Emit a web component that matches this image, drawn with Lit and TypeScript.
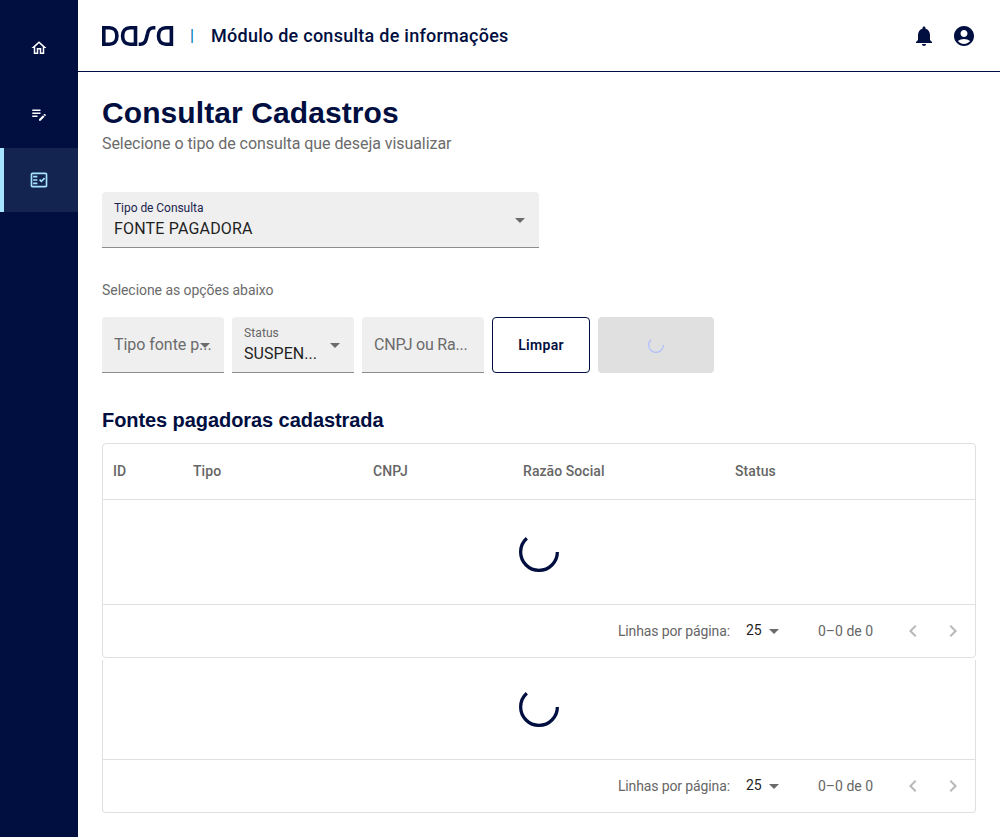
import { LitElement, html, css, svg } from "lit";
import { customElement, property } from "lit/decorators.js";

const icons: Record<string, string> = {
  home: "M12 5.69l5 4.5V18h-2v-6H9v6H7v-7.81l5-4.5M12 3 2 12h3v8h6v-6h2v6h6v-8h3L12 3z",
  edit: "M3 10h11v2H3v-2zm0-2h11V6H3v2zm0 8h7v-2H3v2zm15.01-3.13.71-.71c.39-.39 1.02-.39 1.41 0l.71.71c.39.39.39 1.02 0 1.41l-.71.71-2.12-2.12zm-.71.71-5.3 5.3V21h2.12l5.3-5.3-2.12-2.12z",
  check:
    "M20 3H4c-1.1 0-2 .9-2 2v14c0 1.1.9 2 2 2h16c1.1 0 2-.9 2-2V5c0-1.1-.9-2-2-2zm0 16H4V5h16v14zM19.41 10.42 17.99 9l-3.17 3.17-1.41-1.42L12 12.16 14.82 15zM5 7h5v2H5zm0 4h5v2H5zm0 4h5v2H5z",
  bell: "M12 22c1.1 0 2-.9 2-2h-4c0 1.1.89 2 2 2zm6-6v-5c0-3.07-1.64-5.64-4.5-6.32V4c0-.83-.67-1.5-1.5-1.5s-1.5.67-1.5 1.5v.68C7.63 5.36 6 7.92 6 11v5l-2 2v1h16v-1l-2-2z",
  account:
    "M12 2C6.48 2 2 6.48 2 12s4.48 10 10 10 10-4.48 10-10S17.52 2 12 2zm0 4c1.93 0 3.5 1.57 3.5 3.5S13.93 13 12 13s-3.5-1.57-3.5-3.5S10.07 6 12 6zm0 14c-2.03 0-4.43-.82-6.14-2.88C7.55 15.8 9.68 15 12 15s4.45.8 6.14 2.12C16.43 19.18 14.03 20 12 20z",
  drop: "M7 10l5 5 5-5z",
  left: "M15.41 16.59 10.83 12l4.58-4.59L14 6l-6 6 6 6 1.41-1.41z",
  right: "M8.59 16.59 13.17 12 8.59 7.41 10 6l6 6-6 6-1.41-1.41z",
};

@customElement("ui-icon")
class UiIcon extends LitElement {
  @property() name = "home";
  @property({ type: Number }) size = 24;
  static styles = css`
    :host { display: inline-flex; flex: none; }
    svg { display: block; fill: currentColor; }
  `;
  render() {
    return html`<svg viewBox="0 0 24 24" width=${this.size} height=${this.size} fill-rule="evenodd">
      ${svg`<path d=${icons[this.name]} />`}
    </svg>`;
  }
}

@customElement("ui-spinner")
class UiSpinner extends LitElement {
  @property({ type: Number }) size = 40;
  static styles = css`
    :host { display: inline-flex; }
    svg { display: block; }
    circle { fill: none; stroke: currentColor; stroke-width: 3.6; stroke-dasharray: 80 200; }
  `;
  render() {
    return html`<svg viewBox="22 22 44 44" width=${this.size} height=${this.size}>
      <circle cx="44" cy="44" r="20.2" />
    </svg>`;
  }
}

@customElement("filled-field")
class FilledField extends LitElement {
  @property() label = "";
  @property() value = "";
  @property({ type: Boolean }) select = false;
  static styles = css`
    :host { display: block; }
    .field {
      position: relative;
      box-sizing: border-box;
      height: 56px;
      padding: 7px 0 0 12px;
      background: #efefef;
      border-bottom: 1px solid #8c8c8c;
      border-radius: 4px 4px 0 0;
      white-space: nowrap;
      color: #6b6b6b;
    }
    .label { font-size: 12px; line-height: 18px; letter-spacing: var(--label-spacing, 0.1px); color: var(--label-color, #666); }
    .value { font-size: 16px; line-height: 23px; color: #1f1f1f; letter-spacing: var(--value-spacing, 0.05px); }
    .placeholder { font-size: 16px; line-height: 42px; letter-spacing: var(--value-spacing, -0.05px); }
    .arrow { position: absolute; right: 7px; top: 16px; color: #6b6b6b; }
  `;
  render() {
    return html`<div class="field">
      ${this.value
        ? html`<div class="label">${this.label}</div><div class="value">${this.value}</div>`
        : html`<div class="placeholder">${this.label}</div>`}
      ${this.select ? html`<ui-icon class="arrow" name="drop"></ui-icon>` : null}
    </div>`;
  }
}

@customElement("table-footer")
class TableFooter extends LitElement {
  static styles = css`
    :host {
      display: flex;
      align-items: center;
      justify-content: flex-end;
      height: 52px;
      border-top: 1px solid #e0e0e0;
      padding-right: 10px;
      font-size: 14px;
      line-height: 20px;
      color: #666;
      white-space: nowrap;
    }
    .rows { letter-spacing: -0.12px; }
    .size { display: flex; align-items: center; margin: 0 32px 0 16px; color: #1f1f1f; }
    .num { width: 16px; margin-top: -2px; }
    .size ui-icon { color: #6b6b6b; }
    .range { margin-right: 28px; width: 55px; }
    .nav { color: #b8b8b8; }
    .next { margin-left: 16px; }
  `;
  render() {
    return html`<span class="rows">Linhas por página:</span>
      <span class="size"><span class="num">25</span><ui-icon name="drop"></ui-icon></span>
      <span class="range">0–0 de 0</span>
      <ui-icon class="nav" name="left"></ui-icon>
      <ui-icon class="nav next" name="right"></ui-icon>`;
  }
}

@customElement("app-root")
class AppRoot extends LitElement {
  static styles = css`
    :host {
      display: flex;
      height: 837px;
      overflow: hidden;
      background: #fff;
      color: #000e40;
      font-family: Roboto, "Liberation Sans", sans-serif;
    }
    .side { flex: none; box-sizing: border-box; width: 78px; padding-top: 16px; background: #000e40; color: #fff; display: flex; flex-direction: column; gap: 2px; }
    .item { box-sizing: border-box; height: 64px; display: flex; align-items: center; justify-content: center; }
    .active { background: #132451; color: #a6e3ff; border-left: 4px solid #a6e3ff; padding-right: 4px; }
    .page { flex: 1; min-width: 0; }
    .top { box-sizing: border-box; height: 72px; border-bottom: 1px solid #000e40; padding: 0 24px; display: flex; align-items: center; }
    .logo { display: block; width: 72px; height: 20px; }
    .bar { margin-left: 16px; width: 4px; font-size: 16px; line-height: 18px; font-weight: 500; color: #0078b8; }
    .module { margin-left: 17px; font-size: 18px; line-height: 24px; font-weight: 500; letter-spacing: 0.26px; }
    .actions { margin-left: auto; display: flex; gap: 16px; }
    .content { padding: 23px 24px 0; }
    h1 { margin: 0; font-family: "Liberation Sans", sans-serif; font-size: 30px; line-height: 35px; font-weight: 700; letter-spacing: 0.09px; }
    .sub { margin-top: 2px; font-size: 16px; line-height: 24px; color: #6b6b6b; letter-spacing: -0.06px; }
    .type { display: block; width: 437px; margin-top: 36px; --label-color: #1b2550; --label-spacing: -0.05px; --value-spacing: 0.18px; }
    .hint { margin-top: 32px; font-size: 14px; line-height: 20px; color: #6b6b6b; letter-spacing: -0.05px; }
    .filters { display: flex; gap: 8px; margin-top: 17px; }
    .filters filled-field { width: 122px; }
    .cnpj { --value-spacing: -0.22px; }
    button { box-sizing: border-box; height: 56px; padding: 0; border-radius: 4px; font: 600 14px Roboto, sans-serif; display: flex; align-items: center; justify-content: center; }
    .clear { width: 98px; background: #fff; border: 1px solid #000e40; color: #000e40; letter-spacing: 0.3px; }
    .busy { width: 116px; background: #e0e0e0; border: 0; color: #b3c0fb; }
    h2 { margin: 34px 0 0; font-family: "Liberation Sans", sans-serif; font-size: 20px; line-height: 26px; font-weight: 700; letter-spacing: -0.07px; }
    .box { box-sizing: border-box; border: 1px solid #e0e0e0; border-radius: 4px; }
    .grid { margin-top: 10px; }
    .head { box-sizing: border-box; display: grid; grid-template-columns: 80px 180px 150px 212px 1fr; height: 56px; align-items: center; padding: 0 0 1px 10px; border-bottom: 1px solid #e0e0e0; font-size: 14px; font-weight: 500; letter-spacing: 0.07px; color: #666; }
    .load { height: 104px; display: flex; align-items: center; justify-content: center; }
    .extra { margin-top: 2px; border-top: 0; border-radius: 0 0 4px 4px; }
    .extra .load { height: 94px; padding-bottom: 5px; }
  `;
  render() {
    return html`
      <nav class="side">
        <div class="item"><ui-icon name="home" size="18"></ui-icon></div>
        <div class="item"><ui-icon name="edit" size="18"></ui-icon></div>
        <div class="item active"><ui-icon name="check" size="20"></ui-icon></div>
      </nav>
      <div class="page">
        <header class="top">
          <svg class="logo" viewBox="0 0 72 20" fill="none" stroke="#000e40" stroke-width="3.6">
            <path d="M1.8 1.8H7.5C12.1 1.8 14.9 5 14.9 10S12.1 18.2 7.5 18.2H1.8Z" />
            <path d="M33.5 1.8H28C23.4 1.8 20.6 5 20.6 10S23.4 18.2 28 18.2H33.5Z" />
            <path d="M36.7 18.2H38.5C42.2 18.2 43.6 16 44.3 12.7L45.6 7.3C46.3 4 47.9 1.8 51.6 1.8H53.4" />
            <path d="M69.4 1.8H63.9C59.3 1.8 56.5 5 56.5 10S59.3 18.2 63.9 18.2H69.4Z" />
          </svg>
          <span class="bar">|</span>
          <span class="module">Módulo de consulta de informações</span>
          <div class="actions"><ui-icon name="bell"></ui-icon><ui-icon name="account"></ui-icon></div>
        </header>
        <main class="content">
          <h1>Consultar Cadastros</h1>
          <div class="sub">Selecione o tipo de consulta que deseja visualizar</div>
          <filled-field class="type" label="Tipo de Consulta" value="FONTE PAGADORA" select></filled-field>
          <div class="hint">Selecione as opções abaixo</div>
          <div class="filters">
            <filled-field label="Tipo fonte p..." select></filled-field>
            <filled-field label="Status" value="SUSPEN..." select></filled-field>
            <filled-field class="cnpj" label="CNPJ ou Ra..."></filled-field>
            <button class="clear">Limpar</button>
            <button class="busy" disabled aria-label="Carregando"><ui-spinner size="16"></ui-spinner></button>
          </div>
          <h2>Fontes pagadoras cadastrada</h2>
          <section class="box grid">
            <div class="head">
              ${["ID", "Tipo", "CNPJ", "Razão Social", "Status"].map((c) => html`<span>${c}</span>`)}
            </div>
            <div class="load"><ui-spinner></ui-spinner></div>
            <table-footer></table-footer>
          </section>
          <section class="box extra">
            <div class="load"><ui-spinner></ui-spinner></div>
            <table-footer></table-footer>
          </section>
        </main>
      </div>
    `;
  }
}
